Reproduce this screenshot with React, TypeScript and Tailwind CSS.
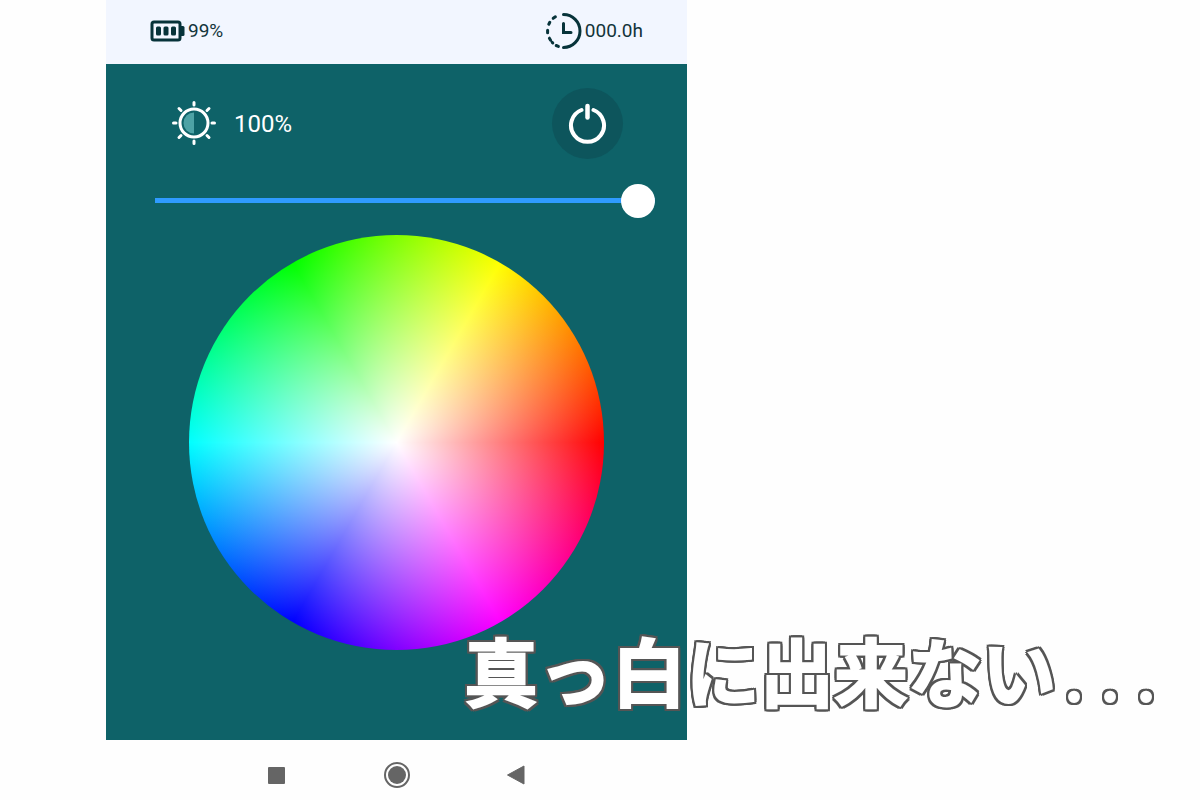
import { useState } from "react";

function BatteryIcon() {
  return (
    <svg width="36" height="22" viewBox="0 0 36 22" fill="none" aria-hidden="true">
      <rect x="2" y="2" width="28" height="18" rx="2" stroke="#07333a" strokeWidth="3" />
      <rect x="6" y="6.500" width="5" height="9" rx="1.500" fill="#07333a" />
      <rect x="13.500" y="6.500" width="5" height="9" rx="1.500" fill="#07333a" />
      <rect x="21" y="6.500" width="5" height="9" rx="1.500" fill="#07333a" />
      <path d="M31 6h2a1.500 1.500 0 0 1 1.500 1.500v7a1.500 1.500 0 0 1-1.500 1.500h-2z" fill="#07333a" />
    </svg>
  );
}

function TimerIcon() {
  return (
    <svg
      width="38"
      height="38"
      viewBox="0 0 38 38"
      fill="none"
      stroke="#07333a"
      strokeWidth="3"
      strokeLinecap="round"
      aria-hidden="true"
    >
      <path d="M18.500 2.500a16.500 16.500 0 0 1 0 33" />
      <path d="M8.200 6.300l2.200-1.500M3.800 12.200l1-1.900M2.600 18.200v2.600M4.400 26.200l1.200 2M11.200 33.500l2.200.9M7.200 30.400l.6.600" />
      <path d="M18.500 11.500v9h7.500" />
    </svg>
  );
}

function BrightnessIcon() {
  return (
    <svg width="46" height="46" viewBox="-0.500 1 46 46" fill="none" aria-hidden="true">
      <path d="M23.500 12.500a10.500 10.500 0 0 0 0 21z" fill="#4da2a5" />
      <circle cx="23.500" cy="23" r="14" stroke="#fff" strokeWidth="3" />
      <g stroke="#fff" strokeWidth="3" strokeLinecap="round">
        <path d="M23.500 2.500v2.500M23.500 41v2.500M3 23h2.500M41.500 23H44" />
        <path d="M8.500 8.500l2 2M38.500 8.500l-2 2M8.500 37.500l2-2M38.500 37.500l-2-2" />
      </g>
    </svg>
  );
}

function PowerIcon() {
  return (
    <svg
      width="40"
      height="42"
      viewBox="0.500 0.500 40 42"
      fill="none"
      stroke="#fff"
      strokeLinecap="round"
      aria-hidden="true"
    >
      <path d="M14 7.500A16.500 16.500 0 1 0 26 7.500" strokeWidth="4" />
      <path d="M20 3.500v11.500" strokeWidth="4.500" />
    </svg>
  );
}

function StatusBar() {
  return (
    <header className="flex h-16 items-center justify-between bg-[#f2f6ff] pr-11 pb-0.5 pl-11 text-[19px] text-[#12343a]">
      <div className="flex items-center gap-0.5">
        <BatteryIcon />
        <span>99%</span>
      </div>
      <div className="flex items-center gap-0.5">
        <TimerIcon />
        <span>000.0h</span>
      </div>
    </header>
  );
}

function ColorWheel() {
  return (
    <div className="mx-auto mt-[18px] aspect-square w-full max-w-[415px] rounded-full bg-[radial-gradient(closest-side,#fff,rgba(255,255,255,0)),conic-gradient(from_90deg,#f00,#f0f,#00f,#0ff,#0f0,#ff0,#f00)]" />
  );
}

function NavBar() {
  return (
    <nav className="flex h-15 items-center justify-center bg-[#fefefe] pt-2.5">
      <button type="button" aria-label="Recent apps" className="flex h-10 w-30 items-center justify-center">
        <span className="size-[17px] rounded-[1px] bg-[#656565]" />
      </button>
      <button type="button" aria-label="Home" className="flex h-10 w-30 items-center justify-center">
        <svg width="28" height="28" viewBox="0 0 28 28" fill="none" aria-hidden="true">
          <circle cx="14" cy="14" r="12" stroke="#656565" strokeWidth="2" />
          <circle cx="14" cy="14" r="9" fill="#656565" />
        </svg>
      </button>
      <button type="button" aria-label="Back" className="flex h-10 w-30 items-center justify-center">
        <svg width="20" height="20" viewBox="3 0 20 20" aria-hidden="true">
          <path d="M3.500 10L20 1v18z" fill="#656565" stroke="#656565" strokeLinejoin="round" />
        </svg>
      </button>
    </nav>
  );
}

function Caption() {
  return (
    <p className="absolute bottom-[72px] left-[464px] flex items-baseline font-['Noto_Sans_CJK_JP',sans-serif] text-[74px] leading-[100px] font-bold whitespace-nowrap text-white [-webkit-text-stroke:2px_#fff] [filter:drop-shadow(2px_0_0_#555)_drop-shadow(-2px_0_0_#555)_drop-shadow(0_2px_0_#555)_drop-shadow(0_-2px_0_#555)]">
      真っ白に出来ない
      <span className="w-9 text-center text-[54px]">.</span>
      <span className="w-9 text-center text-[54px]">.</span>
      <span className="w-9 text-center text-[54px]">.</span>
    </p>
  );
}

export default function App() {
  const [brightness, setBrightness] = useState(100);

  return (
    <div className="relative min-h-screen overflow-hidden bg-[#fefefe] font-['Roboto',sans-serif] lg:pl-[106px]">
      <div className="flex min-h-screen w-full max-w-[581px] flex-col">
        <StatusBar />

        <main className="flex-1 bg-[#0e6268] pt-6">
          <div className="flex items-center justify-between px-16">
            <div className="flex items-center gap-[18px] text-2xl text-white">
              <BrightnessIcon />
              <label htmlFor="brightness">{brightness}%</label>
            </div>
            <button
              type="button"
              aria-label="Power"
              className="flex size-[71px] items-center justify-center rounded-full bg-[#0d555c]"
            >
              <PowerIcon />
            </button>
          </div>

          <div className="mt-6 pr-8 pl-[49px]">
            <input
              id="brightness"
              type="range"
              min={0}
              max={100}
              value={brightness}
              onChange={(e) => setBrightness(Number(e.target.value))}
              className="block h-[34px] w-full appearance-none bg-transparent [&::-webkit-slider-runnable-track]:h-[5px] [&::-webkit-slider-runnable-track]:bg-[#2f9bff] [&::-webkit-slider-thumb]:-mt-[14px] [&::-webkit-slider-thumb]:size-[34px] [&::-webkit-slider-thumb]:appearance-none [&::-webkit-slider-thumb]:rounded-full [&::-webkit-slider-thumb]:bg-white"
            />
          </div>

          <ColorWheel />
        </main>

        <NavBar />
      </div>

      <Caption />
    </div>
  );
}
